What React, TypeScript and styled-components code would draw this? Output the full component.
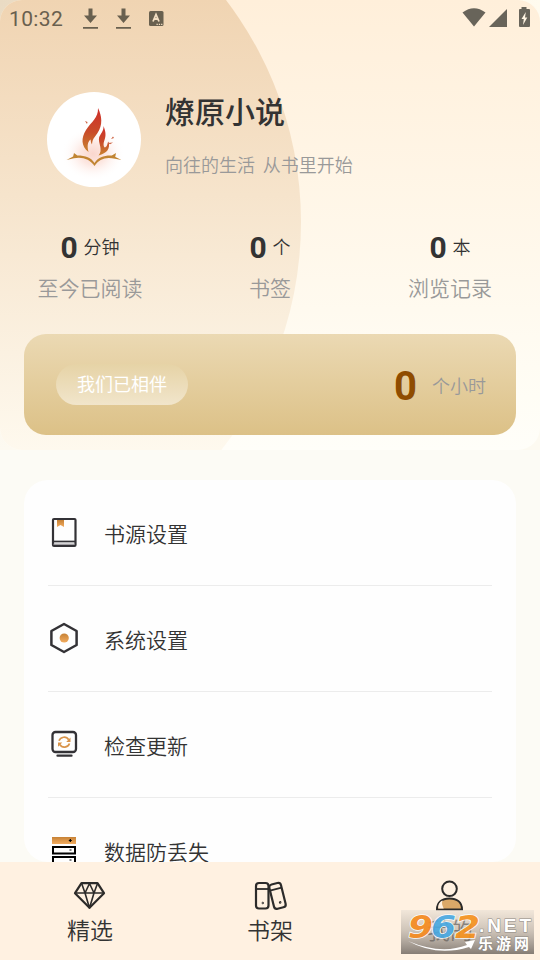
import React from "react";
import styled, { createGlobalStyle } from "styled-components";

const GlobalStyle = createGlobalStyle`
  * { box-sizing: border-box; }
  body { margin: 0; }
  svg { display: block; flex: none; }
`;

const Screen = styled.div`
  position: relative;
  width: 540px;
  height: 960px;
  overflow: hidden;
  display: flex;
  flex-direction: column;
  background: #fcfbf5;
  color: #333;
  font-family: Roboto, "Noto Sans CJK SC", sans-serif;
  font-weight: 350;
`;

const HeroBackdrop = styled.div`
  flex: none;
  background:
    linear-gradient(transparent, #fdfaf1),
    linear-gradient(to right, #eadbc3, #fffbef);
`;

const Hero = styled.section`
  position: relative;
  z-index: 0;
  height: 450px;
  overflow: hidden;
  border-radius: 22px;
  background: linear-gradient(#ffefda, #fffdf5 88%, #fffef9);
`;

const Glow = styled.div`
  position: absolute;
  z-index: -1;
  left: -431px;
  top: -144px;
  width: 732px;
  height: 732px;
  border-radius: 50%;
  background: linear-gradient(#f0d4b2 144px, #fef9ee 594px);
`;

const StatusBar = styled.header`
  display: flex;
  justify-content: space-between;
  height: 37px;
  padding: 0 9px;
  color: #69604f;
`;

const StatusGroup = styled.div`
  display: flex;
  align-items: center;
`;

const Clock = styled.time`
  width: 71px;
  font-size: 21px;
  font-weight: 400;
  letter-spacing: 0.35px;
`;

const Profile = styled.div`
  display: flex;
  gap: 24px;
  padding: 55px 0 0 47px;
`;

const ProfileText = styled.div`
  display: flex;
  flex-direction: column;
  height: 95px;
`;

const AppName = styled.h1`
  margin: 2px 0 0;
  font-size: 30px;
  line-height: 38px;
  font-weight: 500;
`;

const Slogan = styled.p`
  margin: 21px 0 0;
  font-size: 18px;
  line-height: 26px;
  white-space: pre;
  word-spacing: -0.5px;
  color: #999;
`;

const Stats = styled.div`
  display: grid;
  grid-template-columns: repeat(3, 1fr);
  margin-top: 41px;
`;

const Stat = styled.div`
  display: flex;
  flex-direction: column;
  align-items: center;
`;

const StatValue = styled.div`
  display: flex;
  align-items: center;
  gap: 6px;
  height: 40px;
  font-size: 18px;
  b { font-size: 30px; line-height: 36px; }
  span { line-height: 26px; padding-bottom: 1px; }
`;

const StatLabel = styled.div`
  height: 44px;
  line-height: 42px;
  font-size: 21px;
  color: #999;
`;

const TimeCard = styled.div`
  display: flex;
  align-items: center;
  height: 101px;
  margin: 22px 24px 0;
  padding: 0 30px 0 32px;
  border-radius: 22px;
  background: linear-gradient(#ebd9b3, #dcc187);
`;

const Pill = styled.span`
  width: 132px;
  height: 41px;
  border-radius: 21px;
  line-height: 42px;
  text-align: center;
  font-size: 18px;
  font-weight: 400;
  color: #fff;
  background: linear-gradient(#e6d3a6, #f1e5cb);
`;

const Hours = styled.div`
  display: flex;
  align-items: center;
  gap: 15px;
  margin-left: auto;
  font-size: 18px;
  color: #999;
  b { padding-top: 4px; font-size: 40px; line-height: 46px; color: #8f4c00; }
`;

const Menu = styled.section`
  height: 382px;
  flex: none;
  margin: 30px 24px 0;
  padding: 0 24px;
  overflow: hidden;
  border-radius: 24px;
  background: #fefefe;
`;

const MenuItem = styled.div`
  display: flex;
  align-items: center;
  gap: 24px;
  height: 106px;
  border-bottom: 1px solid #ececec;
  font-size: 21px;
  svg { margin-bottom: 2px; }
`;

const NavBar = styled.nav`
  display: grid;
  grid-template-columns: repeat(3, 1fr);
  height: 98px;
  flex: none;
  background: #fff1e1;
`;

const NavItem = styled.div`
  display: flex;
  flex-direction: column;
  align-items: center;
  padding-top: 17px;
  font-size: 23px;
  line-height: 38px;
`;

const Watermark = styled.div`
  position: absolute;
  left: 401px;
  top: 910px;
`;

const Download = () => (
  <svg width="33" height="37" viewBox="0 0 33 37">
    <path d="M8.500 8.500h4v7h4.500l-6.500 7.500-6.500-7.500h4.500zM3 27h15v1.700H3z" fill="#69604f" />
  </svg>
);

const LeftStatusIcons = () => (
  <>
    <Download />
    <Download />
    <svg width="18" height="37" viewBox="0 0 18 37">
      <rect x="3" y="11" width="14.500" height="15" rx="1.500" fill="#69604f" />
      <path d="M7 21.500l3-7 3 7M8 19h4" fill="none" stroke="#f4dfc3" strokeWidth="1.800" />
      <path d="M10.500 24.300h1.300m1 0h1.300m1 0h1.300" stroke="#f4dfc3" strokeWidth="1.200" />
    </svg>
  </>
);

const RightStatusIcons = () => (
  <svg width="69" height="37" viewBox="462 0 69 37" fill="#68645a">
    <path d="M462.500 12.500Q474 4 485.500 12.500L474 26.500z" />
    <path d="M507 9v18h-18z" />
    <path d="M521.500 7h5v2h2.500q1 0 1 1v16q0 1-1 1h-9q-1 0-1-1V10q0-1 1-1h1.500z" />
    <path d="M525.800 12l-4.300 7h2.300l-.800 6 4.300-7.500h-2.300z" fill="#fff4e2" />
  </svg>
);

const Avatar = () => (
  <svg width="94" height="95" viewBox="47 92 94 95">
    <defs>
      <linearGradient id="fire" x2="0" y2="1">
        <stop stopColor="#cf2f2b" />
        <stop offset=".55" stopColor="#c94c29" />
        <stop offset="1" stopColor="#c98530" />
      </linearGradient>
      <radialGradient id="ember">
        <stop stopColor="#f9cfc4" />
        <stop offset=".4" stopColor="#fce3dc" />
        <stop offset="1" stopColor="#fff" stopOpacity="0" />
      </radialGradient>
    </defs>
    <ellipse cx="94" cy="139.500" rx="47" ry="47.500" fill="#fff" />
    <ellipse cx="93" cy="154" rx="32" ry="27" fill="url(#ember)" opacity=".85" />
    <path d="M98 108C102 116 103 125 97.500 133C94 138 92.500 139 92 144.500C90.500 142.500 91 141 90.500 139.500C87.500 142 87 146 88.500 152C81 146 81 138 86 130C91 122 98.500 118 98 108z" fill="url(#fire)" />
    <path d="M103.500 126C106 132 106 136 104.500 140C103 144 103.500 147 105 147.500C108 146 107 143 108.500 141.500C110.500 149 107 153 98.500 155.500C103.500 150 98 143 99 138C100 134 104 131 103.500 126z" fill="url(#fire)" />
    <path d="M66.500 160L75 155.500C84 155 91 157 94.500 163C98 157 105 155 112.500 155.500L121.500 160L115 158.800C106 156.500 99 159 94.500 166C90 159 82 156.500 74 158.200zM73 157l1-4 4 3zM111 156l5-3-1 5z" fill="#c18532" />
    <path d="M85 121l2.500 1-.5 2zM111 139l3-1-1-1.500zM108 143l5-.5-3 1.800z" fill="#cb5d3b" />
  </svg>
);

const OrangeGradient = () => (
  <linearGradient id="amber" x2="0" y2="1">
    <stop stopColor="#c68135" />
    <stop offset="1" stopColor="#f2ac5f" />
  </linearGradient>
);

const BookIcon = () => (
  <svg width="32" height="34" viewBox="0 0 32 34" fill="none" stroke="#333236" strokeWidth="2.200">
    <defs><OrangeGradient /></defs>
    <rect x="5" y="4" width="22.500" height="27" rx="1" />
    <path d="M5 26.500h23" strokeWidth="1.700" />
    <path d="M5 29.200h22" strokeWidth="1" stroke="#77747a" />
    <path d="M9 5h7v7l-3.500-2L9 12z" stroke="none" fill="url(#amber)" />
  </svg>
);

const SettingsIcon = () => (
  <svg width="32" height="34" viewBox="0 0 32 34" fill="none" stroke="#333236" strokeWidth="2.500">
    <path d="M16 3l12.600 7v14L16 31 3.400 24V10z" strokeLinejoin="round" />
    <circle cx="16.200" cy="17" r="4.600" stroke="none" fill="url(#amber)" />
  </svg>
);

const UpdateIcon = () => (
  <svg width="32" height="34" viewBox="0 0 32 34" fill="none" stroke="#333236" strokeWidth="2.300">
    <rect x="4.500" y="5" width="23.500" height="20" rx="3" />
    <path d="M9.500 28.700h14" strokeLinecap="round" />
    <path d="M11 13.800a5.400 5.400 0 0 1 9.700-1M21.500 16.500a5.400 5.400 0 0 1-9.700 1" stroke="#d9944a" strokeWidth="1.700" />
    <path d="M22.500 10.500v4.400h-4.300zM10 19.800v-4.400h4.300z" fill="#d9944a" stroke="none" />
  </svg>
);

const DataIcon = () => (
  <svg width="32" height="34" viewBox="0 0 32 34" fill="none" stroke="#000" strokeWidth="2">
    <path d="M4 4h24v7H4z" stroke="none" fill="url(#amber)" />
    <path d="M5 14h22v6.500H5zM5 24h22v7H5z" />
    <path d="M20.800 7.500h3m-1.500-1.500v3M21.500 17h2M21.500 27h2" strokeWidth="1.200" />
  </svg>
);

const DiamondIcon = () => (
  <svg width="36" height="34" viewBox="0 0 36 34" fill="none" stroke="#2c2b2a" strokeWidth="2.200" strokeLinejoin="round">
    <path d="M9.500 4.200h16l6.500 10-14.500 14.500L3 14.200z" />
    <path d="M3 14h29M9.500 4L13 14l4.500-9.500L22 14l3.500-9.500M13 14l4.500 15L22 14" strokeWidth="1.600" />
  </svg>
);

const ShelfIcon = () => (
  <svg width="36" height="34" viewBox="-1 0 36 34" fill="none" stroke="#2c2b2a" strokeWidth="2.200">
    <rect x="3" y="4" width="12.500" height="25.500" rx="3" />
    <path d="M3 10h12.500" strokeWidth="1.800" />
    <g transform="rotate(-14 24 17)">
      <rect x="18.500" y="4.500" width="12" height="25" rx="3" />
      <path d="M18.500 10h12" strokeWidth="1.800" />
      <circle cx="25.500" cy="24" r=".8" strokeWidth="1" />
    </g>
    <circle cx="9.800" cy="24" r=".8" strokeWidth="1" />
  </svg>
);

const MineIcon = () => (
  <svg width="36" height="34" viewBox="0 0 36 34" fill="none" stroke="#2c2b2a" strokeWidth="2">
    <path d="M5 30.500c0-7 5-11 12.500-11S30 23.500 30 30.500z" fill="#daa868" />
    <path d="M6.200 29.500c0-4 1-6.500 4.500-8-1.500 3 0 5 1 8z" fill="#fff1e1" stroke="none" />
    <circle cx="17.500" cy="9.800" r="7.300" />
  </svg>
);

const WatermarkArt = () => (
  <svg width="133" height="44" viewBox="0 0 133 44">
    <defs>
      <linearGradient id="plate" x2="0" y2="1">
        <stop stopColor="#e9e0d5" stopOpacity=".6" />
        <stop offset=".45" stopColor="#b0a89f" stopOpacity=".6" />
        <stop offset="1" stopColor="#756d66" stopOpacity=".88" />
      </linearGradient>
    </defs>
    <rect width="133" height="44" fill="url(#plate)" />
    <g stroke="#fff" strokeWidth="1.600" paintOrder="stroke" fontFamily="DejaVu Sans, sans-serif" fontWeight="700" fontStyle="italic" fontSize="32" opacity=".9">
      <text x="7" y="28" fill="#f68a1d" textLength="25" lengthAdjust="spacingAndGlyphs">9</text>
      <text x="30" y="28" fill="#48a9e3" textLength="25" lengthAdjust="spacingAndGlyphs">6</text>
      <text x="54" y="28" fill="#f6921d" textLength="25" lengthAdjust="spacingAndGlyphs">2</text>
    </g>
    <g fill="#fff" stroke="#8c8782" strokeWidth="1" paintOrder="stroke" fontWeight="700">
      <text x="78" y="22" fontFamily="Liberation Sans, sans-serif" fontSize="19" textLength="52" lengthAdjust="spacing">.NET</text>
      <text x="77" y="39" fontFamily="Noto Sans CJK SC, sans-serif" fontSize="15" textLength="51">乐游网</text>
    </g>
    <path d="M7 31Q40 45 66 35L64 32l10-2-4 9-2-2Q36 47 7 31z" fill="#fff" />
  </svg>
);

const stats = [
  { unit: "分钟", label: "至今已阅读" },
  { unit: "个", label: "书签" },
  { unit: "本", label: "浏览记录" },
];

const menu = [
  { icon: <BookIcon />, label: "书源设置" },
  { icon: <SettingsIcon />, label: "系统设置" },
  { icon: <UpdateIcon />, label: "检查更新" },
  { icon: <DataIcon />, label: "数据防丢失" },
];

const tabs = [
  { icon: <DiamondIcon />, label: "精选" },
  { icon: <ShelfIcon />, label: "书架" },
  { icon: <MineIcon />, label: "我的" },
];

export default function App() {
  return (
    <>
      <GlobalStyle />
      <Screen lang="zh-CN">
        <HeroBackdrop>
          <Hero>
            <Glow />
            <StatusBar>
              <StatusGroup><Clock>10:32</Clock><LeftStatusIcons /></StatusGroup>
              <StatusGroup><RightStatusIcons /></StatusGroup>
            </StatusBar>
            <Profile>
              <Avatar />
              <ProfileText>
                <AppName>燎原小说</AppName>
                <Slogan>{"向往的生活  从书里开始"}</Slogan>
              </ProfileText>
            </Profile>
            <Stats>
              {stats.map((s) => (
                <Stat key={s.label}>
                  <StatValue><b>0</b><span>{s.unit}</span></StatValue>
                  <StatLabel>{s.label}</StatLabel>
                </Stat>
              ))}
            </Stats>
            <TimeCard>
              <Pill>我们已相伴</Pill>
              <Hours><b>0</b>个小时</Hours>
            </TimeCard>
          </Hero>
        </HeroBackdrop>
        <Menu>
          {menu.map((m) => (
            <MenuItem key={m.label}>{m.icon}<span>{m.label}</span></MenuItem>
          ))}
        </Menu>
        <NavBar>
          {tabs.map((t) => (
            <NavItem key={t.label}>{t.icon}{t.label}</NavItem>
          ))}
        </NavBar>
        <Watermark><WatermarkArt /></Watermark>
      </Screen>
    </>
  );
}
